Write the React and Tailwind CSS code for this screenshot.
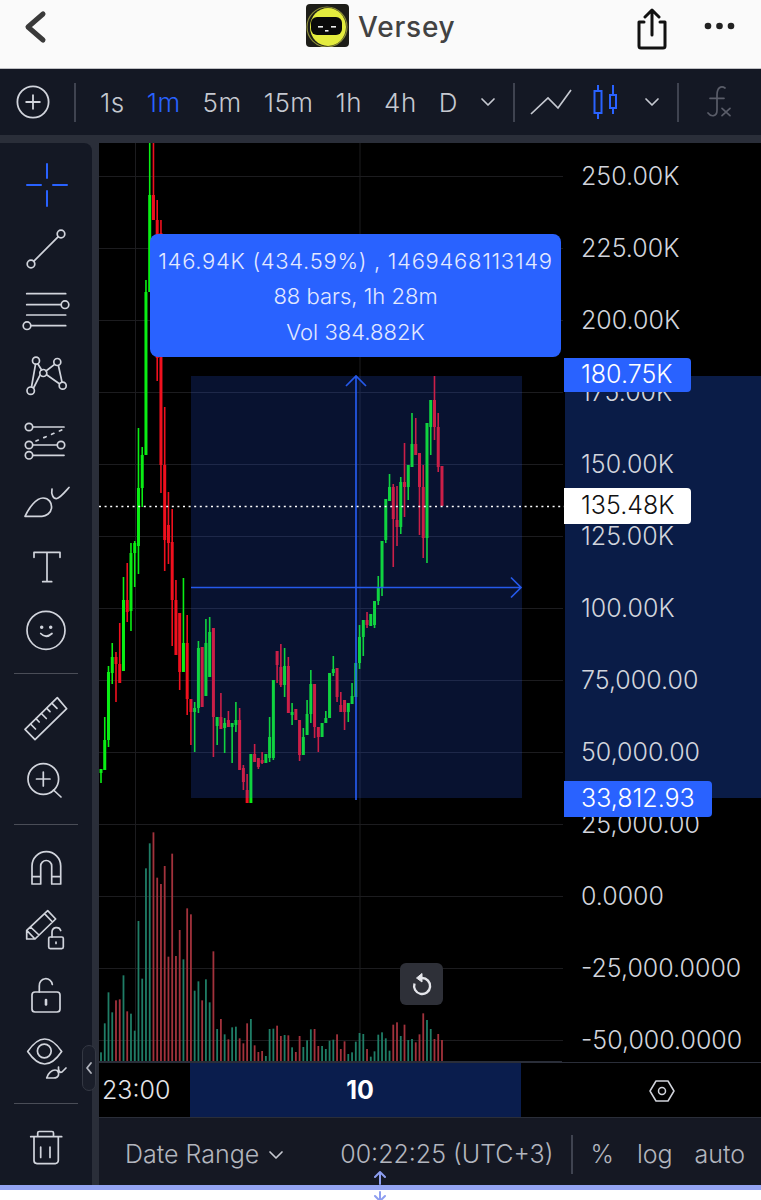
import React from "react";

const G = "#0aee14", R = "#f0101e";
// [index, wickTop, wickBottom, bodyTop, bodyBottom, isGreen]
const candles = [
[0,769,783,769,773,1],[1,717,770,740,770,1],[2,666,747,672,740,1],[3,643,684,657,673,1],[4,652,702,657,664,0],[5,623,683,664,683,0],[6,577,671,600,671,1],[7,563,622,600,612,0],[8,543,631,553,611,1],[9,541,587,543,553,1],
[10,428,574,488,546,1],[11,447,507,455,488,1],[12,280,455,292,455,1],[13,143,292,195,292,1],[14,143,220,195,220,0],[15,200,381,220,358,0],[16,220,493,233,465,0],[17,407,571,465,540,0],[18,492,564,525,543,0],[19,509,646,542,600,0],
[20,580,655,600,655,0],[21,613,690,613,672,0],[22,578,672,643,672,1],[23,615,715,643,699,0],[24,699,745,699,712,0],[25,702,752,708,712,1],[26,641,713,648,708,1],[27,647,707,647,707,0],[28,619,696,643,696,1],[29,617,677,632,677,1],
[30,628,757,628,717,0],[31,717,745,717,726,1],[32,693,729,717,729,0],[33,718,753,723,728,1],[34,711,727,720,727,0],[35,723,763,723,727,1],[36,702,732,720,725,1],[37,708,770,720,770,0],[38,765,790,768,782,0],[39,774,803,790,803,0],
[40,754,803,754,803,1],[41,744,762,754,762,0],[42,758,769,758,767,0],[43,752,764,760,763,0],[44,754,763,754,763,1],[45,717,762,737,758,1],[46,680,760,680,758,1],[47,651,683,651,665,0],[48,644,687,667,685,0],[49,648,697,666,685,1],
[50,657,713,666,713,0],[51,703,725,712,715,1],[52,709,720,709,720,0],[53,720,761,720,755,0],[54,728,755,737,755,1],[55,700,735,714,735,1],[56,670,723,684,714,1],[57,684,738,684,727,0],[58,727,752,727,737,0],[59,723,737,723,737,1],
[60,711,723,718,723,1],[61,673,718,673,718,1],[62,656,676,669,673,1],[63,668,702,668,697,0],[64,692,712,705,712,0],[65,700,730,700,712,0],[66,703,722,703,712,1],[67,683,704,696,704,1],[68,663,697,663,697,1],[69,625,669,637,663,1],
[70,620,656,620,637,1],[71,612,628,620,625,0],[72,614,626,614,626,1],[73,601,628,601,625,1],[74,576,605,588,601,1],[75,541,596,541,588,1],[76,499,543,499,540,1],[77,474,501,487,501,1],[78,484,567,487,519,0],[79,486,546,520,527,0],
[80,477,534,482,527,1],[81,443,517,482,487,0],[82,465,500,465,487,1],[83,413,467,444,467,1],[84,418,455,444,455,0],[85,453,535,453,487,0],[86,465,558,487,538,0],[87,423,563,423,538,1],[88,400,455,400,427,1],[89,376,440,400,427,0],
[90,413,472,427,467,0],[91,466,506,466,506,0],
];
const volumes = [
[1,697],[1,610],[1,517],[1,577],[0,541],[0,538],[1,466],[0,574],[1,581],[1,632],[1,303],[1,476],[1,145],[1,70],[0,37],[0,173],[0,192],[0,138],[0,410],[0,101],[0,408],[0,330],[1,418],[0,265],[0,283],[1,512],[1,484],[0,541],[1,478],[1,547],[0,394],[1,627],[0,597],[1,643],[0,658],[1,622],[1,620],[0,655],[0,670],[0,610],[1,597],[0,676],[0,696],[0,693],[1,708],[1,627],[1,626],[0,617],[0,648],[1,645],[0,646],[1,682],[0,696],[0,648],[1,681],[1,661],[1,628],[0,627],[0,678],[1,678],[1,687],[1,662],[1,659],[0,643],[0,687],[0,664],[1,702],[1,697],[1,665],[1,639],[1,642],[0,687],[1,710],[1,694],[1,644],[1,637],[1,655],[1,692],[0,614],[0,607],[1,648],[0,614],[1,660],[1,657],[0,667],[0,643],[0,580],[1,600],[1,627],[0,657],[0,642],[0,660],
];
const cx = (i) => 101 + 3.747 * i;
const gridY = [176, 248, 320, 392, 464, 536, 608, 680, 752, 824, 896, 968, 1040];
const prices = ["250.00K","225.00K","200.00K","175.00K","150.00K","125.00K","100.00K","75,000.00","50,000.00","25,000.00","0.0000","-25,000.0000","-50,000.0000"];

function Chart() {
  return (
    <svg width="466" height="919" viewBox="99 143 466 919" className="block shrink-0">
      {gridY.map((y) => <line key={y} x1="99" x2="563" y1={y + 0.5} y2={y + 0.5} stroke="#1c1c1f" strokeWidth="1" />)}
      <line x1="135.5" x2="135.5" y1="143" y2="1062" stroke="#1c1c1f" />
      <line x1="360" x2="360" y1="143" y2="1062" stroke="#1c1c1f" />
      {volumes.map(([g, v], i) => {
        const top = 820 + v / 3;
        return <rect key={i} x={cx(i) - 0.9} width="1.8" y={top} height={1061.6 - top} fill={g ? "#1f7d66" : "#a2323c"} />;
      })}
      {candles.map(([i, wt, wb, bt, bb, g]) => (
        <g key={i} fill={g ? G : R}>
          <rect x={cx(i) - 0.8} width="1.6" y={wt} height={wb - wt} />
          <rect x={cx(i) - 1.5} width="3" y={bt} height={bb - bt} />
        </g>
      ))}
      <rect x="191" y="376" width="331" height="422" fill="#2962ff" fillOpacity="0.19" />
      <g stroke="#2962ff" strokeWidth="1.7" fill="none" opacity="0.9">
        <path d="M356 377V800M346 386L356 376L366 386" />
        <path d="M191 587.5H521M511 577.5L521 587.5L511 597.5" />
      </g>
      <line x1="99" x2="565" y1="506.5" y2="506.5" stroke="#fff" strokeWidth="1.6" strokeDasharray="2 3.6" />
      <line x1="99" x2="562" y1="1061.5" y2="1061.5" stroke="#2a2e39" />
    </svg>
  );
}

function Ic({ children, c = "#d1d4dc", w = 1.7, size = 60 }) {
  return (
    <svg width={size} height={size} viewBox="0 0 60 60" fill="none" stroke={c} strokeWidth={w} strokeLinecap="round" strokeLinejoin="round" className="block shrink-0 overflow-visible">
      {children}
    </svg>
  );
}

const tools = [
  ["h-[62px]", <Ic c="#2962ff" w={2}><path d="M11 30H25M37 30H51M31 9V23M31 36V51" /></Ic>],
  ["h-[63px]", <Ic><circle cx="45" cy="16" r="3.8" /><circle cx="15" cy="46" r="3.8" /><path d="M42.3 18.7L17.7 43.3" /></Ic>],
  ["h-[64px]", <Ic><path d="M10.7 12.7H49.7M10.7 23.7H45M10.7 34H49.7M15 44.7H49.7" /><circle cx="49" cy="23.7" r="3.8" /><circle cx="11" cy="44.7" r="3.8" /></Ic>],
  ["h-[64px]", <Ic><path d="M15.5 42L19.5 19.3M21.8 18.8L25.6 25M30 26L38.6 19.3M42.4 20.5L46 37M24 30.2L17.5 43M30.6 29.8L43.4 38.7" /><circle cx="20" cy="15.7" r="3.5" /><circle cx="41.3" cy="17" r="3.5" /><circle cx="27.3" cy="28" r="3.5" /><circle cx="46.7" cy="40.7" r="3.5" /><circle cx="14.7" cy="45.7" r="3.7" /></Ic>],
  ["h-[65px]", <Ic><path d="M17 17H48M17 35H41M17 45.3H48" /><path d="M20 31L45.7 20" strokeDasharray="2.5 6" /><circle cx="13" cy="17" r="3.7" /><circle cx="13" cy="35" r="3.7" /><circle cx="45" cy="35" r="3.7" /><circle cx="13" cy="45.3" r="3.7" /></Ic>],
  ["h-[64px]", <Ic><path d="M9 42.3C13 34 20 24 27 24C33 24 36 29 35.5 34C35 39 30 42.3 26 42.3Z" /><path d="M36 15C35 20 37 25 41 24.5C44 24 49 18 53 13.5" /></Ic>],
  ["h-[62px]", <Ic><path d="M18 20.3V15.3H44V20.3M31 15.3V44.7M26.7 44.7H35.7" /></Ic>],
  ["h-[63px]", <Ic><circle cx="30" cy="30.3" r="19" /><circle cx="25.7" cy="27.3" r="0.9" fill="#d1d4dc" /><circle cx="34.7" cy="27.3" r="0.9" fill="#d1d4dc" /><path d="M24.7 33.5Q30 39 36 33.5" /></Ic>],
];
const tools2 = [
  ["h-[62px] mt-[14px]", <Ic><path d="M41.3 8.6L50.7 19.7L19 50.7L9 40.3Z" /><path d="M14.6 35L19.5 40M20 29.7L23.2 33M25.4 24.5L30.3 29.5M30.8 19.4L34 22.7M36 14.3L41 19.3" /></Ic>],
  ["h-[62px]", <Ic><circle cx="27.3" cy="28" r="15.3" /><path d="M37.5 39L45 46M20.5 28H34M27.3 21V35" /></Ic>],
];
const tools3 = [
  ["h-[62px] mt-[12px]", <Ic><path d="M16 46V28A14.35 14.35 0 0 1 44.7 28V46H35.7V28A5.5 5.5 0 0 0 24.7 28V46ZM16 38.6H24.7M35.7 38.6H44.7" /></Ic>],
  ["h-[64px]", <Ic><path d="M10.7 38V29.3L31.7 9.7L39.7 18L19 38ZM10.7 29.3L19 38M14.5 26L23 34M28.5 12.7L36.5 21" /><rect x="32.7" y="36" width="14.6" height="11.6" rx="1.5" /><path d="M36 36V31A4.5 4.5 0 0 1 44.7 29.5" /><path d="M40 41V42.5" /></Ic>],
  ["h-[64px]", <Ic><rect x="16" y="27" width="28" height="20" rx="3" /><path d="M23.3 27V21A6.5 6.5 0 0 1 36.3 19.5" /><path d="M30 35V39.5" strokeWidth="2.6" /></Ic>],
  ["h-[48px]", <Ic><path d="M11.7 30.5Q28.7 5.5 45.7 30.5Q28.7 55.5 11.7 30.5Z" /><circle cx="28.3" cy="30" r="6.9" /><path d="M30.7 57C32 52 36 49 39 49C42 49 43 52 42.5 54C42 56 40 57 37.5 57ZM42.5 46C42 50 44 52 46 51L50 47" /></Ic>],
];

const Divider = ({ cls }) => <div className={"mx-[14px] w-[64px] h-px shrink-0 bg-[#4a4d57] " + cls} />;
const Tool = ({ cls, icon }) => <div className={"flex items-center justify-center shrink-0 " + cls}>{icon}</div>;

function Sidebar() {
  return (
    <div className="relative w-[92px] shrink-0 bg-[#141824] rounded-tr-lg flex flex-col pt-[11px]">
      {tools.map(([c, ic], i) => <Tool key={i} cls={c} icon={ic} />)}
      <Divider cls="mt-[12px]" />
      {tools2.map(([c, ic], i) => <Tool key={i} cls={c} icon={ic} />)}
      <Divider cls="mt-[12px]" />
      {tools3.map(([c, ic], i) => <Tool key={i} cls={c} icon={ic} />)}
      <Divider cls="mt-[28px]" />
      <Tool cls="h-[62px] mt-[11px]" icon={<Ic><path d="M14.7 20.7H45.7M21.7 20.7V17A1.5 1.5 0 0 1 23.2 15.5H36A1.5 1.5 0 0 1 37.5 17V20.7M18 20.7V44.6A3 3 0 0 0 21 47.6H39.3A3 3 0 0 0 42.3 44.6V20.7M24.7 31V41.4M34 31V41.4" /></Ic>} />
      <div className="absolute left-[82px] top-[902px] z-20 w-[14px] h-[46px] rounded-full bg-[#1a1e2a] border border-[#343843] flex items-center justify-center">
        <svg width="8" height="14" viewBox="0 0 8 14" fill="none" stroke="#b2b5be" strokeWidth="1.8" strokeLinecap="round" strokeLinejoin="round"><path d="M6 2L2 7L6 12" /></svg>
      </div>
    </div>
  );
}

const Tf = ({ children, active }) => <span className={active ? "text-[#2962ff]" : ""}>{children}</span>;
const Chevron = ({ cls }) => (
  <svg width="16" height="10" viewBox="0 0 16 10" fill="none" stroke="#c5c8d0" strokeWidth="1.7" strokeLinecap="round" strokeLinejoin="round" className={"block shrink-0 " + cls}><path d="M2 2L8 8L14 2" /></svg>
);
const VLine = ({ cls }) => <div className={"w-[2px] h-[39px] shrink-0 bg-[#3f4350] " + cls} />;

function Toolbar() {
  return (
    <div className="h-[66px] shrink-0 bg-[#141824] flex items-center text-[26px] text-[#c5c8d0] font-light">
      <svg width="34" height="34" viewBox="0 0 34 34" fill="none" stroke="#d1d4dc" strokeWidth="1.8" className="block shrink-0 ml-[16px]"><circle cx="17" cy="17" r="15.6" /><path d="M17 9.5V24.5M9.5 17H24.5" /></svg>
      <VLine cls="ml-[24px]" />
      <div className="flex items-center gap-[22px] ml-[24px] tracking-[0.5px]">
        <Tf>1s</Tf><Tf active>1m</Tf><Tf>5m</Tf><Tf>15m</Tf><Tf>1h</Tf><Tf>4h</Tf><Tf>D</Tf>
      </div>
      <Chevron cls="ml-[22px]" />
      <VLine cls="ml-[17px]" />
      <svg width="42" height="30" viewBox="0 0 42 30" fill="none" stroke="#c5c8d0" strokeWidth="1.7" className="block shrink-0 ml-[15px]"><path d="M1 27L18 11L28 21L41 3" /></svg>
      <svg width="26" height="36" viewBox="0 0 26 36" fill="none" stroke="#2962ff" strokeWidth="2" className="block shrink-0 ml-[20px]"><path d="M6 1V7M6 29V35M21 1V11M21 24V30" /><rect x="2.5" y="7" width="7" height="22" /><rect x="18" y="11" width="6" height="13" /></svg>
      <Chevron cls="ml-[26px]" />
      <VLine cls="ml-[17px]" />
      <svg width="28" height="36" viewBox="0 0 28 36" fill="none" stroke="#5a5d69" strokeWidth="1.7" strokeLinecap="round" className="block shrink-0 ml-[27px]">
        <path d="M19 4C15 1 11 4 11 11V26C11 33 5 33 2 29M4 14.3H18M16 24.3L24 31.7M24 24.3L16 31.7" />
      </svg>
    </div>
  );
}

function Header() {
  return (
    <div className="h-[69px] shrink-0 bg-[#fafafa] border-b border-[#bfc0c4] flex items-center">
      <svg width="24" height="34" viewBox="0 0 24 34" fill="none" stroke="#3a3a3a" strokeWidth="5" strokeLinecap="round" strokeLinejoin="round" className="block shrink-0 ml-[23px] -mt-[15px]"><path d="M20 4L5 17L20 30" /></svg>
      <svg width="43" height="43" viewBox="0 0 43 43" className="block shrink-0 ml-[259px] -mt-[17px]">
        <rect width="43" height="43" rx="4" fill="#1d1d18" />
        <ellipse cx="21" cy="23" rx="20" ry="20" fill="none" stroke="#8a8c3a" strokeWidth="1.2" />
        <ellipse cx="22" cy="23" rx="18" ry="19" fill="#e4ec3e" />
        <rect x="5" y="13" width="31" height="18" rx="6" fill="#0a0a0a" />
        <rect x="12" y="22" width="5" height="1.6" fill="#eee" /><rect x="19" y="26" width="3.5" height="1.6" fill="#eee" /><rect x="25" y="22" width="5" height="1.6" fill="#eee" />
      </svg>
      <span className="ml-[9px] -mt-[14px] text-[28px] font-medium text-[#424242] tracking-[0.8px]">Versey</span>
      <svg width="32" height="42" viewBox="0 0 32 42" fill="none" stroke="#111" strokeWidth="3" strokeLinecap="round" strokeLinejoin="round" className="block shrink-0 ml-auto -mt-[11px]"><path d="M8 14H3V38A2 2 0 0 0 5 40H27A2 2 0 0 0 29 38V14H24M16 27V3M9 9L16 2L23 9" /></svg>
      <svg width="32" height="8" viewBox="0 0 32 8" className="block shrink-0 ml-[36px] mr-[25px] -mt-[17px]" fill="#222"><circle cx="4" cy="4" r="3.3" /><circle cx="15.5" cy="4" r="3.3" /><circle cx="27" cy="4" r="3.3" /></svg>
    </div>
  );
}

function PriceAxis() {
  return (
    <div className="relative w-[196px] shrink-0 overflow-hidden">
      <div className="absolute left-0 right-0 top-[233px] h-[422px] bg-[#0a1c47]" />
      <div className="relative flex flex-col pl-[16px] -mt-[2px] text-[25px] text-[#d1d4dc] font-light">
        {prices.map((p) => <div key={p} className="h-[72px] shrink-0 flex items-center whitespace-nowrap">{p}</div>)}
      </div>
    </div>
  );
}

export default function App() {
  return (
    <div className="relative w-[761px] h-[1200px] overflow-hidden bg-white flex flex-col font-[family-name:Inter,sans-serif]">
      <Header />
      <Toolbar />
      <div className="h-[8px] shrink-0 bg-[#2a2e39]" />
      <div className="h-[1042px] shrink-0 flex bg-[#2a2e39]">
        <Sidebar />
        <div className="w-[662px] ml-[7px] shrink-0 flex flex-col">
          <div className="relative h-[919px] shrink-0 flex bg-black">
            <Chart />
            <PriceAxis />
            <div className="absolute left-[51px] top-[91px] w-[411px] h-[123px] rounded-lg bg-[#2962ff] text-[#e3e9ff] text-[22px] font-light flex flex-col items-center justify-center z-10 pt-[2px]">
              <div className="h-[35.5px] flex items-center whitespace-nowrap tracking-[0.7px]">146.94K (434.59%) , 1469468113149</div>
              <div className="h-[35.5px] flex items-center whitespace-nowrap">88 bars, 1h 28m</div>
              <div className="h-[35.5px] flex items-center whitespace-nowrap">Vol 384.882K</div>
            </div>
            <div className="absolute left-[465px] top-[215px] w-[127px] h-[34px] rounded-r bg-[#2962ff] text-white text-[25px] font-light flex items-center pl-[17px]">180.75K</div>
            <div className="absolute left-[465px] top-[345px] w-[127px] h-[36px] rounded-r bg-white text-[#111] text-[25px] font-light flex items-center pl-[17px]">135.48K</div>
            <div className="absolute left-[465px] top-[638px] w-[148px] h-[36px] rounded-r bg-[#2962ff] text-white text-[25px] font-light flex items-center pl-[17px] whitespace-nowrap">33,812.93</div>
            <div className="absolute left-[301px] top-[820px] w-[43px] h-[42px] rounded-md bg-[#2e3038] flex items-center justify-center">
              <svg width="22" height="24" viewBox="0 0 22 24" fill="none" stroke="#e4e5ea" strokeWidth="2.4" strokeLinejoin="round"><path d="M11 6A8 8 0 1 1 3.5 11.5" /><path d="M11 1.5L5.5 6L11 10Z" fill="#e4e5ea" strokeWidth="1" /></svg>
            </div>
          </div>
          <div className="h-[56px] shrink-0 flex bg-black text-[25px] border-t border-[#2a2e39] border-b">
            <div className="w-[91px] shrink-0 pl-[3px] pt-[2px] flex items-center text-[#e4e5ea] font-light">23:00</div>
            <div className="w-[331px] shrink-0 bg-[#0a1d4d] flex items-center justify-center pl-[9px] pt-[2px] text-white font-bold">10</div>
            <div className="w-[43px] shrink-0" />
            <div className="w-[196px] shrink-0 flex items-center justify-center pt-[1px]">
              <svg width="26" height="24" viewBox="0 0 26 24" fill="none" stroke="#d1d4dc" strokeWidth="1.5" strokeLinejoin="round"><path d="M1 12L7 2H19L25 12L19 22H7Z" /><circle cx="13" cy="12" r="3.5" /></svg>
            </div>
          </div>
          <div className="flex-1 bg-[#151823] flex items-center pt-[6px] text-[25px] text-[#b2b5be] font-light">
            <span className="ml-[26px]">Date Range</span>
            <Chevron cls="ml-[9px]" />
            <span className="ml-[56px] whitespace-nowrap">00:22:25 (UTC+3)</span>
            <VLine cls="ml-[18px]" />
            <span className="ml-[17px]">%</span>
            <span className="ml-[23px]">log</span>
            <span className="ml-[22px]">auto</span>
          </div>
        </div>
      </div>
      <div className="h-[5px] shrink-0 bg-[#93a3f2]" />
      <svg width="16" height="32" viewBox="0 0 16 32" fill="none" stroke="#8d9ef0" strokeWidth="2" strokeLinecap="round" strokeLinejoin="round" className="absolute left-[372px] top-[1170px]">
        <path d="M8 14V2M3 7L8 2L13 7M8 22V32M3 26L8 31L13 26" />
      </svg>
    </div>
  );
}
